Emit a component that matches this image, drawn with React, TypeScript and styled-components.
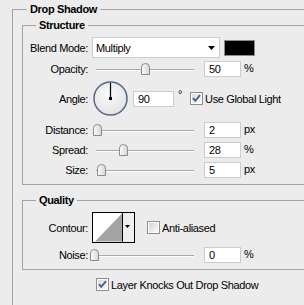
import React from "react";
import styled, { createGlobalStyle } from "styled-components";

const Global = createGlobalStyle`
  html, body { margin: 0; padding: 0; background: #ececec; overflow: hidden; }
  body {
    font-family: "Liberation Sans", Arial, sans-serif;
    font-size: 11px;
    color: #000;
    letter-spacing: -0.35px;
  }
`;

const Page = styled.div`
  width: 304px;
  height: 305px;
  overflow: hidden;
  box-sizing: border-box;
  padding: 3px 0 0 12px;
`;

const Group = styled.fieldset<{ $outer?: boolean; $gapTop?: number }>`
  margin: ${(p) => (p.$outer ? "0" : `${p.$gapTop ?? 3}px 0 0 9px`)};
  border: 1px solid #a3a3a3;
  padding: ${(p) => (p.$outer ? "0 0 60px 0" : "5px 0 6px 0")};
  min-width: 0;
  width: ${(p) => (p.$outer ? "420px" : "auto")};
  box-sizing: border-box;
  display: flex;
  flex-direction: column;
`;

const Legend = styled.legend<{ $indent: number }>`
  margin-left: ${(p) => p.$indent}px;
  padding: 0 3px;
  font-weight: bold;
  line-height: 13px;
  height: 13px;
`;

const Rows = styled.div<{ $gap?: number }>`
  display: flex;
  flex-direction: column;
`;

const Row = styled.div<{ $h: number; $mt?: number }>`
  display: flex;
  align-items: center;
  height: ${(p) => p.$h}px;
  margin-top: ${(p) => p.$mt ?? 0}px;
`;

const Label = styled.div`
  width: 65px;
  flex: none;
  text-align: right;
  margin-right: 4px;
  white-space: nowrap;
`;

const Select = styled.div`
  width: 128px;
  height: 21px;
  box-sizing: border-box;
  border: 1px solid #c9ccd1;
  background: #fff;
  display: flex;
  align-items: center;
  justify-content: space-between;
  padding: 0 4px 0 3px;
  margin-right: 4px;
  flex: none;
`;

const Swatch = styled.div`
  width: 31px;
  height: 16px;
  box-sizing: border-box;
  background: #000;
  border: 1px solid #8c8c8c;
  flex: none;
`;

const SliderBox = styled.div`
  position: relative;
  width: 108px;
  height: 16px;
  margin-right: 4px;
  flex: none;
`;

const Track = styled.div`
  position: absolute;
  left: 4px;
  right: 6px;
  top: 8px;
  height: 1px;
  background: #a9a9a9;
  border-bottom: 1px solid #fdfdfd;
`;

const ThumbSvg = styled.svg`
  position: absolute;
  top: 2px;
  width: 9px;
  height: 12px;
`;

const Field = styled.input<{ $w?: number }>`
  width: ${(p) => p.$w ?? 37}px;
  height: 16px;
  box-sizing: border-box;
  border: 1px solid #c9ccd1;
  background: #fff;
  padding: 0 0 0 4px;
  margin: 0;
  font: inherit;
  letter-spacing: inherit;
  color: #000;
  outline: none;
  flex: none;
`;

const Unit = styled.span`
  margin-left: 3px;
  margin-top: -2px;
`;

const Degree = styled.span`
  align-self: flex-start;
  margin: 7px 8px 0 4px;
`;

const DialSvg = styled.svg`
  width: 35px;
  height: 35px;
  margin: 0 5px 0 1px;
  flex: none;
`;

const CheckRow = styled.label<{ $ml?: number }>`
  display: flex;
  align-items: center;
  gap: 2px;
  margin-left: ${(p) => p.$ml ?? 0}px;
  white-space: nowrap;
`;

const BoxSvg = styled.svg`
  width: 13px;
  height: 13px;
  flex: none;
`;

const ContourSvg = styled.svg`
  width: 43px;
  height: 31px;
  margin-right: 12px;
  flex: none;
`;

const KnockRow = styled.div`
  margin: 8px 0 0 83px;
  height: 13px;
  display: flex;
  align-items: center;
`;

function Thumb({ pct }: { pct: number }) {
  return (
    <ThumbSvg viewBox="0 0 9 12" style={{ left: pct * 1.02 - 2 }}>
      <defs>
        <linearGradient id="tg" x1="0" y1="0" x2="1" y2="0">
          <stop offset="0" stopColor="#fbfbfb" />
          <stop offset="1" stopColor="#d6d6d6" />
        </linearGradient>
      </defs>
      <path
        d="M0.5 11.5 V4.2 Q0.5 0.5 4.5 0.5 Q8.5 0.5 8.5 4.2 V11.5 Z"
        fill="url(#tg)"
        stroke="#8b8b8b"
      />
    </ThumbSvg>
  );
}

function Slider({ pct }: { pct: number }) {
  return (
    <SliderBox>
      <Track />
      <Thumb pct={pct} />
    </SliderBox>
  );
}

function CheckBox({ checked }: { checked: boolean }) {
  return (
    <BoxSvg viewBox="0 0 13 13">
      <defs>
        <linearGradient id={checked ? "cbc" : "cbu"} x1="0" y1="0" x2="1" y2="1">
          <stop offset="0" stopColor={checked ? "#dcdcd8" : "#d4d4d0"} />
          <stop offset="1" stopColor="#fbfbfb" />
        </linearGradient>
      </defs>
      <rect x="0.5" y="0.5" width="12" height="12" fill="#fff" stroke="#8e8f8f" />
      <rect x="2" y="2" width="9" height="9" fill={`url(#${checked ? "cbc" : "cbu"})`} />
      {checked && (
        <path
          d="M3 6.2 L5.3 8.8 L10 3.2"
          fill="none"
          stroke="#4a5c9c"
          strokeWidth="1.9"
        />
      )}
    </BoxSvg>
  );
}

function Dial() {
  return (
    <DialSvg viewBox="0 0 35 35">
      <defs>
        <radialGradient id="dg" cx="0.45" cy="0.4" r="0.6">
          <stop offset="0" stopColor="#fbfbfb" />
          <stop offset="1" stopColor="#e3e3e3" />
        </radialGradient>
      </defs>
      <circle cx="17.5" cy="17.5" r="16.5" fill="url(#dg)" stroke="#56658a" strokeWidth="1.5" />
      <line x1="17.5" y1="2" x2="17.5" y2="17.5" stroke="#000" strokeWidth="1.2" />
      <rect x="16" y="16" width="3" height="3" fill="#000" />
    </DialSvg>
  );
}

function Contour() {
  return (
    <ContourSvg viewBox="0 0 43 31">
      <rect x="0.5" y="0.5" width="42" height="30" fill="#fff" stroke="#000" />
      <polygon points="3,29.5 30,1.5 30,29.5" fill="#a4a4a4" />
      <rect x="31" y="1" width="11" height="29" fill="#efefef" />
      <line x1="30.5" y1="0" x2="30.5" y2="31" stroke="#000" />
      <polygon points="33,13 38,13 35.5,16" fill="#000" />
    </ContourSvg>
  );
}

function SliderRow({
  label,
  pct,
  value,
  unit,
  mt,
}: {
  label: string;
  pct: number;
  value: string;
  unit: string;
  mt: number;
}) {
  return (
    <Row $h={16} $mt={mt}>
      <Label>{label}</Label>
      <Slider pct={pct} />
      <Field readOnly value={value} />
      <Unit>{unit}</Unit>
    </Row>
  );
}

export default function App() {
  return (
    <>
      <Global />
      <Page>
        <Group $outer>
          <Legend $indent={14}>Drop Shadow</Legend>
          <Group $gapTop={3}>
            <Legend $indent={13}>Structure</Legend>
            <Rows>
              <Row $h={21}>
                <Label>Blend Mode:</Label>
                <Select>
                  <span>Multiply</span>
                  <svg width="7" height="4" viewBox="0 0 7 4">
                    <polygon points="0,0 7,0 3.5,4" fill="#000" />
                  </svg>
                </Select>
                <Swatch />
              </Row>
              <SliderRow label="Opacity:" pct={50} value="50" unit="%" mt={3} />
              <Row $h={35} $mt={4}>
                <Label>Angle:</Label>
                <Dial />
                <Field readOnly value="90" $w={41} />
                <Degree>°</Degree>
                <CheckRow>
                  <CheckBox checked />
                  <span>Use Global Light</span>
                </CheckRow>
              </Row>
              <SliderRow label="Distance:" pct={3.4} value="2" unit="px" mt={6} />
              <SliderRow label="Spread:" pct={28} value="28" unit="%" mt={4} />
              <SliderRow label="Size:" pct={6.4} value="5" unit="px" mt={4} />
            </Rows>
          </Group>
          <Group $gapTop={9}>
            <Legend $indent={13}>Quality</Legend>
            <Rows>
              <Row $h={31}>
                <Label>Contour:</Label>
                <Contour />
                <CheckRow>
                  <CheckBox checked={false} />
                  <span>Anti-aliased</span>
                </CheckRow>
              </Row>
              <SliderRow label="Noise:" pct={0} value="0" unit="%" mt={4} />
            </Rows>
          </Group>
          <KnockRow>
            <CheckRow>
              <CheckBox checked />
              <span>Layer Knocks Out Drop Shadow</span>
            </CheckRow>
          </KnockRow>
        </Group>
      </Page>
    </>
  );
}
